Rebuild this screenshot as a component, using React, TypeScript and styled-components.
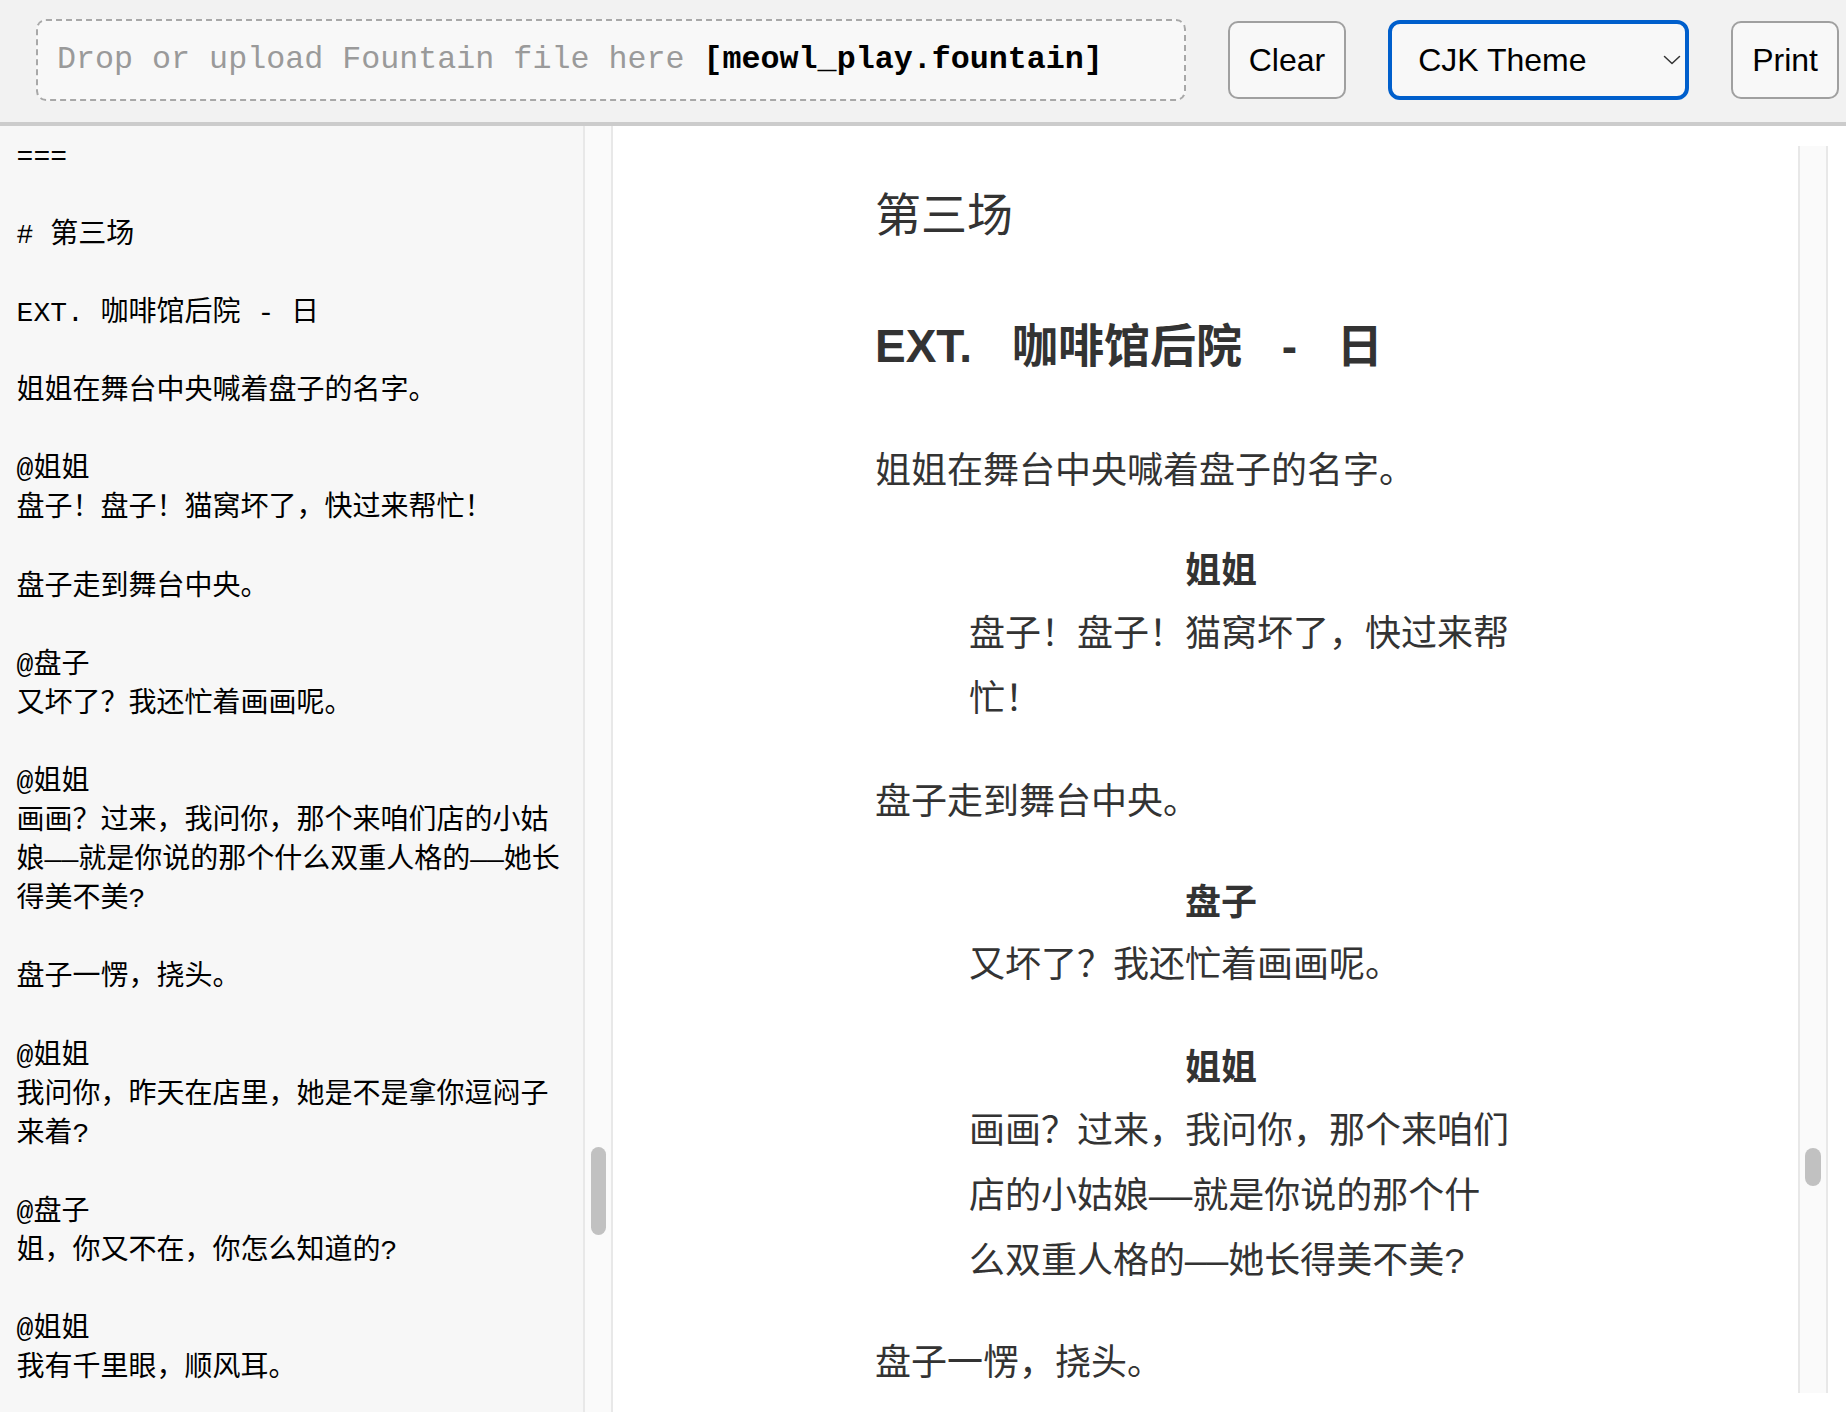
import React from "react";
import styled, { createGlobalStyle } from "styled-components";

const GlobalStyle = createGlobalStyle`
  * { box-sizing: border-box; }
  html, body {
    margin: 0;
    padding: 0;
    height: 100%;
    overflow: hidden;
    background: #ffffff;
  }
  body {
    font-family: "Liberation Sans", "Noto Sans CJK SC", sans-serif;
  }
  #root { height: 100%; }
`;

const Page = styled.div`
  height: 100vh;
  display: flex;
  flex-direction: column;
`;

const Toolbar = styled.header`
  flex: none;
  height: 126px;
  display: flex;
  align-items: center;
  gap: 42px;
  padding: 0 7px 2px 36px;
  background: #f2f2f2;
  border-bottom: 4px solid #cccccc;
`;

const DropZone = styled.div`
  flex: 1;
  min-width: 0;
  height: 82px;
  display: flex;
  align-items: center;
  padding: 0 19px;
  border: 2px dashed #a8a8a8;
  border-radius: 10px;
  background: #f8f8f8;
  font-family: "Liberation Mono", monospace;
  font-size: 31.7px;
  color: #9a9a9a;
  white-space: pre;
`;

const FileName = styled.strong`
  color: #000000;
  font-weight: 700;
`;

const ToolButton = styled.button`
  flex: none;
  height: 78px;
  padding: 0 19px;
  border: 2px solid #a0a0a0;
  border-radius: 10px;
  background: #f8f8f8;
  color: #000000;
  font-family: "Liberation Sans", Arial, sans-serif;
  font-size: 32px;
  cursor: pointer;
`;

const ThemePicker = styled.label`
  flex: none;
  width: 301px;
  height: 80px;
  display: flex;
  align-items: center;
  gap: 6px;
  padding: 0 4px 0 26px;
  border: 4px solid #005fcc;
  border-radius: 12px;
  background: #f8f8f8;
`;

const ThemeSelect = styled.select`
  flex: 1;
  min-width: 0;
  height: 100%;
  appearance: none;
  -webkit-appearance: none;
  border: 0;
  padding: 0;
  background: transparent;
  color: #000000;
  font-family: "Liberation Sans", Arial, sans-serif;
  font-size: 32px;
  outline: none;
`;

const Chevron = styled.svg`
  flex: none;
  width: 18px;
  height: 10px;
`;

const Workspace = styled.main`
  flex: 1;
  min-height: 0;
  display: flex;
`;

const SourcePane = styled.section`
  flex: none;
  width: 613px;
  display: flex;
  background: #f7f7f7;
`;

const SourceText = styled.div`
  flex: 1;
  min-width: 0;
  overflow: hidden;
  padding: 11.5px 16px 0 16.6px;
  font-family: "Liberation Mono", "Noto Sans CJK SC", monospace;
  font-size: 28px;
  line-height: 39.1px;
  color: #000000;
  white-space: pre-wrap;
  overflow-wrap: anywhere;
`;

const ScrollTrack = styled.div`
  flex: none;
  width: 30px;
  display: flex;
  justify-content: center;
  align-items: flex-start;
  background: #fafafa;
  border-left: 2px solid #e8e8e8;
  border-right: 2px solid #e8e8e8;
`;

const ScrollThumb = styled.div<{ $offset: number; $length: number; $thickness: number }>`
  margin-top: ${(p) => p.$offset}px;
  width: ${(p) => p.$thickness}px;
  height: ${(p) => p.$length}px;
  border-radius: 8px;
  background: #c1c1c1;
`;

const PreviewPane = styled.section`
  flex: 1;
  min-width: 0;
  display: flex;
  padding: 20px 18px 19px 20px;
  background: #ffffff;
`;

const PreviewViewport = styled.div`
  flex: 1;
  min-width: 0;
  overflow: hidden;
  padding-top: 27.6px;
`;

const Script = styled.article`
  width: 681px;
  margin: 0 auto;
  font-family: "Liberation Sans", "Noto Sans CJK SC", sans-serif;
  font-size: 36px;
  line-height: 64.8px;
  color: #333333;
`;

const SectionTitle = styled.h2`
  margin: 0 0 49px;
  font-size: 46px;
  font-weight: 400;
  line-height: 82.8px;
`;

const SceneHeading = styled.h3`
  margin: 0 0 50.5px;
  font-size: 46px;
  font-weight: 700;
  line-height: 82.8px;
  word-spacing: 27px;
`;

const Action = styled.p`
  margin: 0 0 36px;
`;

const Character = styled.p`
  margin: 0;
  padding-left: 11px;
  text-align: center;
  font-weight: 700;
`;

const Dialogue = styled.p`
  margin: 0 0 35px 94px;
  padding-top: 1px;
  width: 544px;
  font-family: "Liberation Mono", "Noto Sans CJK SC", sans-serif;
`;

const source = `===

# 第三场

EXT. 咖啡馆后院 - 日

姐姐在舞台中央喊着盘子的名字。

@姐姐
盘子！盘子！猫窝坏了，快过来帮忙！

盘子走到舞台中央。

@盘子
又坏了？我还忙着画画呢。

@姐姐
画画？过来，我问你，那个来咱们店的小姑娘——就是你说的那个什么双重人格的——她长得美不美?

盘子一愣，挠头。

@姐姐
我问你，昨天在店里，她是不是拿你逗闷子来着?

@盘子
姐，你又不在，你怎么知道的?

@姐姐
我有千里眼，顺风耳。`;

type Block =
  | { kind: "action"; text: string }
  | { kind: "speech"; name: string; text: string };

const blocks: Block[] = [
  { kind: "action", text: "姐姐在舞台中央喊着盘子的名字。" },
  { kind: "speech", name: "姐姐", text: "盘子！盘子！猫窝坏了，快过来帮忙！" },
  { kind: "action", text: "盘子走到舞台中央。" },
  { kind: "speech", name: "盘子", text: "又坏了？我还忙着画画呢。" },
  {
    kind: "speech",
    name: "姐姐",
    text: "画画？过来，我问你，那个来咱们店的小姑娘——就是你说的那个什么双重人格的——她长得美不美?",
  },
  { kind: "action", text: "盘子一愣，挠头。" },
];

export default function App() {
  return (
    <Page>
      <GlobalStyle />
      <Toolbar>
        <DropZone>
          {"Drop or upload Fountain file here "}
          <FileName>[meowl_play.fountain]</FileName>
        </DropZone>
        <ToolButton type="button">Clear</ToolButton>
        <ThemePicker>
          <ThemeSelect defaultValue="cjk">
            <option value="cjk">CJK Theme</option>
            <option value="classic">Classic Theme</option>
          </ThemeSelect>
          <Chevron viewBox="0 0 18 10" aria-hidden="true">
            <path d="M1.5 1.5 L9 8.5 L16.5 1.5" fill="none" stroke="#333" strokeWidth="1.5" strokeLinecap="round" strokeLinejoin="round" />
          </Chevron>
        </ThemePicker>
        <ToolButton type="button">Print</ToolButton>
      </Toolbar>
      <Workspace>
        <SourcePane>
          <SourceText>{source}</SourceText>
          <ScrollTrack>
            <ScrollThumb $offset={1021} $length={88} $thickness={15} />
          </ScrollTrack>
        </SourcePane>
        <PreviewPane>
          <PreviewViewport>
            <Script>
              <SectionTitle>第三场</SectionTitle>
              <SceneHeading>EXT. 咖啡馆后院 - 日</SceneHeading>
              {blocks.map((b, i) =>
                b.kind === "action" ? (
                  <Action key={i}>{b.text}</Action>
                ) : (
                  <React.Fragment key={i}>
                    <Character>{b.name}</Character>
                    <Dialogue>{b.text}</Dialogue>
                  </React.Fragment>
                )
              )}
            </Script>
          </PreviewViewport>
          <ScrollTrack>
            <ScrollThumb $offset={1002} $length={38} $thickness={16} />
          </ScrollTrack>
        </PreviewPane>
      </Workspace>
    </Page>
  );
}
